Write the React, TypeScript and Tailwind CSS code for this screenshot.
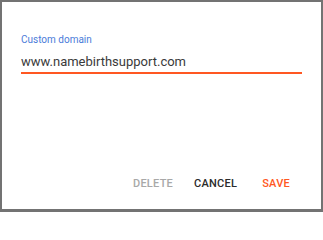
export default function App() {
  return (
    <div className="w-[323px] h-[212px] bg-[#737373] pt-[2px] px-[2px] pb-[3px] font-['Roboto',sans-serif]">
      <div className="flex h-full flex-col bg-white px-[19px]">
        <div className="pt-[32px]">
          <label className="block text-[10px] leading-[12px] text-[#4a7bd9]">Custom domain</label>
          <div className="mt-[8px] border-b-2 border-[#ff5722] pb-[2px] text-[13px] leading-[16px] text-[#3a3a3a]">
            www.namebirthsupport.com
          </div>
        </div>
        <div className="mt-auto flex items-center justify-end pb-[17px] pr-[12px] text-[11px] font-medium tracking-[0.25px]">
          <button className="text-[#a8a8a8]">DELETE</button>
          <button className="ml-[21px] text-[#2b2b2b]">CANCEL</button>
          <button className="ml-[25px] text-[#ff5722]">SAVE</button>
        </div>
      </div>
    </div>
  );
}
